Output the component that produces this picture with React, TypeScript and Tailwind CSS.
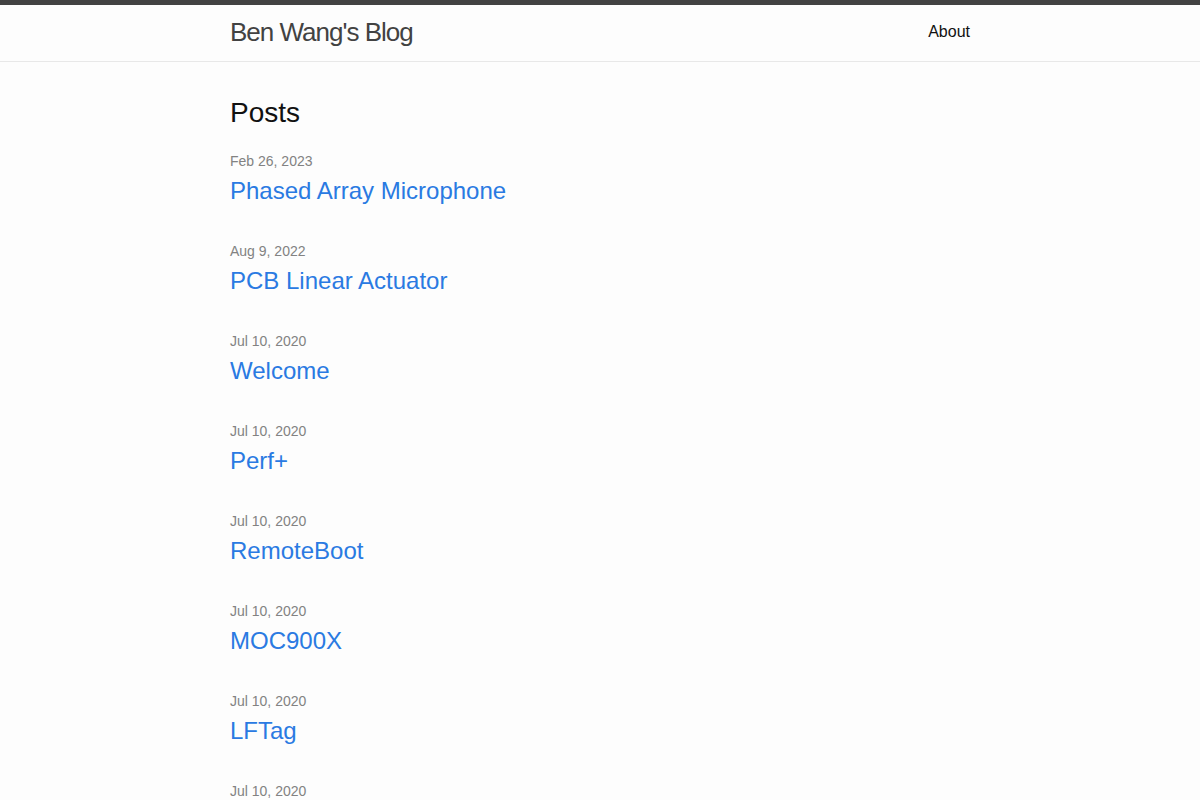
import React from "react";

const posts = [
  { date: "Feb 26, 2023", title: "Phased Array Microphone" },
  { date: "Aug 9, 2022", title: "PCB Linear Actuator" },
  { date: "Jul 10, 2020", title: "Welcome" },
  { date: "Jul 10, 2020", title: "Perf+" },
  { date: "Jul 10, 2020", title: "RemoteBoot" },
  { date: "Jul 10, 2020", title: "MOC900X" },
  { date: "Jul 10, 2020", title: "LFTag" },
  { date: "Jul 10, 2020", title: "Projects" },
];

export default function App() {
  return (
    <div
      className="min-h-screen bg-[#fdfdfd] text-[#111111] text-[16px] leading-[1.5]"
      style={{ fontFamily: '"Liberation Sans", Arial, sans-serif' }}
    >
      <header className="border-t-[5px] border-t-[#424242] border-b border-b-[#e8e8e8] min-h-[61.95px]">
        <div className="max-w-[800px] mx-auto px-[30px] flex justify-between items-start">
          <a
            href="#"
            className="text-[26px] font-light leading-[54px] tracking-[-1px] text-[#424242]"
          >
            Ben Wang's Blog
          </a>
          <nav className="leading-[54px]">
            <a href="#" className="text-[#111111]">
              About
            </a>
          </nav>
        </div>
      </header>
      <main className="py-[30px]">
        <div className="max-w-[800px] mx-auto px-[30px]">
          <h2 className="text-[28px] leading-[42px] mb-[15px] font-normal">Posts</h2>
          <ul>
            {posts.map((p, i) => (
              <li key={i} className="mb-[30px]">
                <div className="leading-[24px]">
                  <span className="text-[14px] text-[#828282]">{p.date}</span>
                </div>
                <h3 className="text-[24px] leading-[36px] font-normal">
                  <a href="#" className="text-[#2a7ae2]">
                    {p.title}
                  </a>
                </h3>
              </li>
            ))}
          </ul>
        </div>
      </main>
    </div>
  );
}
